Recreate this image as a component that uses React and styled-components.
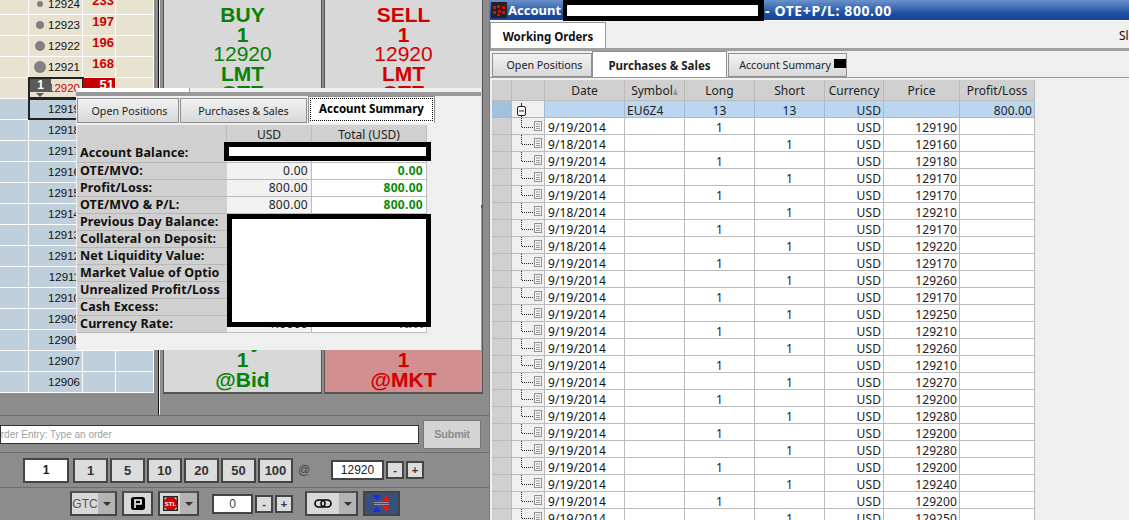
import React from 'react';
import styled, { createGlobalStyle } from 'styled-components';

const Global = createGlobalStyle`
  html, body { margin: 0; padding: 0; width: 1129px; height: 520px; overflow: hidden; background: #efefef; }
  * { box-sizing: border-box; }
  body { font-family: "Noto Sans", "DejaVu Sans", sans-serif; font-size: 12px; color: #111; }
`;

const Page = styled.div`display: flex; width: 1129px; height: 520px; overflow: hidden;`;
const LeftPanel = styled.section`position: relative; width: 490px; height: 520px; background: #8c8c8c; flex: none; display: flex; flex-direction: column; border-right: 1px solid #7a7a7a;`;
const Main = styled.div`height: 416px; flex: none; display: flex; border-bottom: 1px solid #6e6e6e;`;
const Ladder = styled.div`width: 154px; height: 393px; flex: none; overflow: hidden; display: flex; flex-direction: column; justify-content: flex-end; background: #fff;`;
const LRow = styled.div`
  flex: none; height: 21px; display: grid; grid-template-columns: 29px 54px 33px 38px;
  background: ${p => p.$ask ? '#e8e3d0' : '#bfd0dc'}; border-bottom: 1px solid #fff;
`;
const LCell = styled.div`border-right: 1px solid #fff; position: relative;`;
const PriceCell = styled(LCell)`
  display: flex; align-items: center; justify-content: flex-end; padding-right: 2px; font-family: "Liberation Sans", sans-serif;
  font-size: 11.5px; color: ${p => p.$current ? '#c00' : '#111'};
  ${p => p.$boxed ? 'outline: 2px solid #222; outline-offset: -1px;' : ''}
`;
const VolCell = styled(LCell)`
  font: bold 13px/14px "Liberation Sans", sans-serif; color: ${p => p.$hl ? '#fff' : '#c00'}; text-align: right; padding-right: 1px;
  background: ${p => p.$hl ? '#c80000' : 'transparent'};
`;
const Dot = styled.span`
  position: absolute; left: ${p => 11 - p.$s / 2}px; top: 10px; margin-top: ${p => -p.$s / 2}px;
  width: ${p => p.$s}px; height: ${p => p.$s}px; border-radius: 50%; background: #808080;
`;
const PosBadge = styled.span`
  position: absolute; left: 1px; top: 1px; width: 21px; height: 13px; background: #5a5a5a; color: #fff;
  font: bold 12px/13px "Liberation Sans", sans-serif; text-align: center;
`;
const PosArrow = styled.span`
  position: absolute; left: 7px; top: 15px; border: 4px solid transparent; border-top: 4px solid #5a5a5a; border-bottom: 0;
`;
const Split = styled.div`width: 10px; height: 415px; flex: none; padding-left: 4px; display: flex;`;
const SplitBlack = styled.div`width: 1px; background: #111;`;
const SplitWhite = styled.div`width: 1px; background: #f4f4f4;`;
const Buttons = styled.div`display: grid; grid-template-columns: 157px 157px; grid-template-rows: 206px 185px; gap: 2px 4px; height: 393px;`;
const Trade = styled.div`
  background: ${p => p.$bg || '#d8d8d8'}; color: ${p => p.$c}; display: flex; flex-direction: column; align-items: center;
  justify-content: ${p => p.$end ? 'flex-end' : 'flex-start'}; padding: ${p => p.$end ? '0 0 3px' : '5px 0 0'}; font: bold 21px/19.5px "Liberation Sans", sans-serif;
  border-bottom: 1px solid #555; outline: 1px solid #555;
`;
const TradeThin = styled.span`font-weight: 400;`;

const Popup = styled.div`position: absolute; left: 76px; top: 88px; width: 405px; height: 262px; background: #efefef;`;
const PopupStrip = styled.div`height: 4px; background: linear-gradient(to right, #fff 113px, #999 113px, #999 114px, #efefef 114px);`;
const PopupBand = styled.div`height: 4px; background: #999;`;
const TabRow = styled.div`display: flex; align-items: flex-end; height: ${p => p.$h}px; padding-left: ${p => p.$pl}px; ${p => p.$line ? 'border-bottom: 1px solid #999;' : ''}`;
const Tab = styled.div`
  width: ${p => p.$w}px; height: ${p => p.$active ? p.$h + 1 : p.$h - 1}px; flex: none; display: flex; align-items: center; justify-content: center;
  border: 1px solid #8f8f8f; border-bottom: ${p => p.$active ? '0' : '1px solid #8f8f8f'};
  background: ${p => p.$active ? '#fff' : 'linear-gradient(#f2f2f2, #d8d8d8)'}; font-size: ${p => p.$active ? 11.5 : 10.7}px; color: #222;
  font-weight: ${p => p.$active ? 700 : 400}; margin-right: 1px; margin-left: ${p => p.$ml || 0}px;
  padding: ${p => p.$pt || 0}px 0 ${p => p.$pb || 0}px ${p => p.$pad || 0}px; white-space: nowrap;
  ${p => p.$dotted ? 'outline: 1px dotted #111; outline-offset: -3px; color: #000;' : ''}
`;
const TabMark = styled.i`width: 12px; height: 9px; background: #000; display: block; margin: -4px 0 0 3px;`;
const SumTable = styled.div`display: grid; grid-template-columns: 150px 85px 115px; grid-template-rows: 20px 18px; grid-auto-rows: 17px; width: 350px; margin: 2px 0 0 1px; position: relative;`;
const SumHead = styled.div`background: #d0d0d0; border-right: 1px solid #bbb; text-align: center; line-height: 20px; font-size: 12px; color: #222;`;
const SumLabel = styled.div`background: #d0d0d0; font-weight: 700; font-size: 12.5px; line-height: 16px; padding-left: 3px; border-bottom: 1px solid #b8b8b8; white-space: nowrap; overflow: hidden; color: #111; letter-spacing: .1px;`;
const SumVal = styled.div`
  background: ${p => p.$tot ? '#fff' : '#f2f2f2'}; text-align: right; padding-right: 3px; line-height: 16px; font-size: 12px;
  border-bottom: 1px solid #bbb; border-right: 1px solid #bbb; letter-spacing: .3px;
  color: ${p => p.$tot ? '#0a8a0a' : '#222'}; font-weight: ${p => p.$tot ? 700 : 400};
`;
const Redact = styled.div`position: absolute; background: #fff; border: 5px solid #000; left: ${p => p.$l}px; top: ${p => p.$t}px; width: ${p => p.$w}px; height: ${p => p.$h}px;`;

const EntryRow = styled.div`height: 37px; flex: none; display: flex; align-items: center; border-bottom: 1px solid #6e6e6e; padding-right: 8px;`;
const EntryInput = styled.div`
  width: 419px; height: 19px; margin: 0 4px 0 0; background: #fff; border: 1px solid #333; color: #a0a0a0; font-size: 10px; line-height: 17px;
  text-indent: -8px; overflow: hidden; white-space: nowrap; font-family: "Liberation Sans", sans-serif;
`;
const Submit = styled.div`width: 58px; height: 29px; background: #d4d4d4; border: 1px solid #eee; color: #8c8c8c; outline: 1px solid #777; outline-offset: -1px; display: flex; align-items: center; justify-content: center; font: bold 11px "Liberation Sans", sans-serif; letter-spacing: -.3px;`;
const Row = styled.div`height: ${p => p.$h}px; flex: none; display: flex; align-items: center; padding-left: ${p => p.$pl}px; ${p => p.$line ? 'border-bottom: 1px solid #6e6e6e;' : ''}`;
const White = styled.div`
  width: ${p => p.$w}px; height: ${p => p.$h}px; margin-right: ${p => p.$mr ?? 0}px; flex: none; background: #fff; border: 2px solid #444; display: flex; align-items: center; justify-content: center;
  font: bold 12px "Liberation Sans", sans-serif; color: ${p => p.$c || '#222'}; font-weight: ${p => p.$thin ? 400 : 700};
`;
const Qty = styled.div`
  width: 35px; height: 25px; margin-right: 2px; flex: none; background: #dcdcdc; border: 2px solid #444; border-top-color: #555; display: flex; align-items: center; justify-content: center;
  font: bold 13px "Liberation Sans", sans-serif; color: #333;
`;
const At = styled.span`font: 12px "Liberation Sans", sans-serif; color: #444; width: 36px; flex: none; padding-left: 3px;`;
const Step = styled.div`
  width: 18px; height: 18px; margin-right: ${p => p.$mr ?? 2}px; flex: none; background: #dcdcdc; border: 2px solid #444; display: flex; align-items: center; justify-content: center;
  font: bold 11px "Liberation Sans", sans-serif; color: #333;
`;
const Combo = styled.div`
  width: ${p => p.$w}px; height: 25px; margin-right: ${p => p.$mr ?? 0}px; flex: none; border: 2px solid #444; background: #d8d8d8; display: flex; align-items: stretch;
  border-top-color: #555;
`;
const ComboMain = styled.div`flex: 1; display: flex; align-items: center; justify-content: center; font: 12px "Liberation Sans", sans-serif; color: #555;`;
const ComboDrop = styled.div`width: 17px; flex: none; background: #b4b4b4; display: flex; align-items: center; justify-content: center;`;
const Caret = styled.i`width: 0; height: 0; border: 4px solid transparent; border-top: 4px solid #333; border-bottom: 0; display: block;`;
const SwapBtn = styled.div`width: 37px; height: 25px; flex: none; border: 2px solid #444; background: #38507c; display: flex; align-items: center; justify-content: center;`;

const RightPanel = styled.section`flex: 1; height: 520px; background: #efefef; display: flex; flex-direction: column; overflow: hidden;`;
const TitleBar = styled.header`
  height: 21px; flex: none; background: linear-gradient(#6a93cc, #1c4da0 70%, #17439a); display: flex; align-items: center; margin-bottom: 1px;
  color: #fff; font-weight: 700; font-size: 13px; padding-left: 1px; white-space: nowrap; border-bottom: 1px solid #fff;
`;
const TitleRedact = styled.div`width: 201px; height: 21px; margin-bottom: -1px; background: #fff; border: 5px solid #000; border-left-width: 4px; border-right-width: 6px; margin-left: 2px; flex: none;`;
const TitleValue = styled.span`font-size: 14px; letter-spacing: .6px; margin-left: 1px;`;
const TopTabs = styled.div`height: 26px; flex: none; display: flex; justify-content: space-between; overflow: hidden;`;
const WorkTab = styled.div`width: 116px; height: 26px; padding-top: 2px; background: #fff; border: 1px solid #9a9a9a; border-bottom: 0; display: flex; align-items: center; justify-content: center; font-weight: 700; font-size: 11.5px; color: #111;`;
const Sl = styled.span`width: 10px; overflow: hidden; font-size: 12px; line-height: 28px; color: #300;`;
const Band = styled.div`height: 3px; flex: none; background: #a0a0a0;`;
const GridWrap = styled.div`margin: 2px 0 0 2px; width: 543px; flex: none; background: #fff;`;
const GRow = styled.div`display: grid; grid-template-columns: 20px 33px 80px 60px 70px 70px 59px 76px 75px; height: ${p => p.$h || 17}px;`;
const GHead = styled.div`background: #d0d0d0; border-right: 1px solid #bbb; border-bottom: 1px solid #bbb; text-align: center; line-height: 19px; color: #222; white-space: nowrap; overflow: hidden; display: flex; align-items: center; justify-content: center;`;
const GCell = styled.div`
  background: ${p => p.$group ? '#bcd6f0' : p.$tree ? '#f0f0f0' : p.$ind ? '#d0d0d0' : '#fff'};
  ${p => p.$group && p.$tree ? 'background:#f0f0f0;' : ''} ${p => p.$group && p.$ind ? 'background:#a3c0dc;' : ''}
  border-right: 1px solid ${p => p.$group ? '#9ebbd8' : '#bbb'}; border-bottom: 1px solid ${p => p.$group ? '#9ebbd8' : '#bbb'};
  text-align: ${p => p.$a || 'left'}; padding: 1px ${p => p.$a === 'center' ? 0 : 2}px 0; line-height: 17px; color: #222; white-space: nowrap; overflow: hidden;
  letter-spacing: .1px;
`;
const TreeCell = styled(GCell)`padding: 0;`;
const DateText = styled.span`padding-left: 1px; color: #111;`;

const SortIcon = () => (
  <svg width="5" height="7" viewBox="0 0 5 7" style={{ flex: 'none', margin: '2px 0 0 0' }}>
    <path d="M2.5 0L5 7H0z" fill="#999" />
  </svg>
);
const TreeIcon = () => (
  <svg width="32" height="16" viewBox="0 0 32 16" style={{ display: 'block' }}>
    <path d="M9.5 0v10M10 9.5h11" stroke="#222" strokeWidth="1" strokeDasharray="1 1" fill="none" />
    <rect x="22.5" y="3.5" width="7" height="9" fill="#f4f4f4" stroke="#333" strokeDasharray="1 1" />
    <path d="M24 6h4M24 8.5h4M24 10.5h4" stroke="#999" fill="none" />
  </svg>
);
const MinusIcon = () => (
  <svg width="32" height="16" viewBox="0 0 32 16" style={{ display: 'block' }}>
    <path d="M9.5 2v3M9.5 14v3" stroke="#222" />
    <rect x="5.5" y="5.5" width="8" height="9" rx="1.5" fill="#fff" stroke="#222" />
    <path d="M7 10h5" stroke="#222" />
  </svg>
);
const StlIcon = () => (
  <svg width="15" height="15" viewBox="0 0 20 20">
    <rect x="1" y="1" width="18" height="18" fill="#fff" stroke="#222" strokeWidth="2" />
    <path d="M6 1.5h8l4.5 4.5v8L14 18.5H6L1.5 14V6z" fill="#d40000" stroke="#333" />
    <text x="10" y="13" fontFamily="Liberation Sans" fontSize="8" fontWeight="700" fill="#fff" textAnchor="middle">STL</text>
  </svg>
);
const PIcon = () => (
  <svg width="14" height="13" viewBox="0 0 14 13">
    <rect width="14" height="13" rx="2.5" fill="#000" />
    <path d="M4 11V3h6v4H5" stroke="#fff" strokeWidth="1.6" fill="none" />
  </svg>
);
const ChainIcon = () => (
  <svg width="18" height="9" viewBox="0 0 18 9">
    <rect x="1" y="1" width="10" height="7" rx="3.5" fill="none" stroke="#000" strokeWidth="1.6" />
    <rect x="7" y="1" width="10" height="7" rx="3.5" fill="none" stroke="#000" strokeWidth="1.6" />
  </svg>
);
const SwapIcon = () => (
  <svg width="17" height="19" viewBox="0 0 17 19">
    <path d="M0 1h8L4 7z" fill="#1c2ce0" /><path d="M9 7h8l-4-6z" fill="#e01818" />
    <path d="M1 8.5h15M1 10.5h15" stroke="#8a93a8" />
    <path d="M0 18h8l-4-6z" fill="#1c2ce0" /><path d="M9 12h8l-4 6z" fill="#e01818" />
  </svg>
);
const AccountIcon = () => (
  <svg width="16" height="16" viewBox="0 0 16 16" style={{ flex: 'none', marginRight: 1 }}>
    <rect width="16" height="16" fill="#222" />
    <path d="M2 4h3v3H2zM6 3h3v3H6zM11 4h3v3h-3zM2 9h3v3H2zM7 8h3v3H7zM11 9h3v3h-3zM6 12h3v2H6z" fill="#c81414" />
  </svg>
);

const vols = { 12924: '233', 12923: '197', 12922: '196', 12921: '168', 12920: '51' };
const dots = { 12924: 6, 12923: 8, 12922: 10, 12921: 12 };
const ladderPrices = [12924, 12923, 12922, 12921, 12920, 12919, 12918, 12917, 12916, 12915, 12914, 12913, 12912, 12911, 12910, 12909, 12908, 12907, 12906];

const summary = [
  ['Account Balance:', '', ''],
  ['OTE/MVO:', '0.00', '0.00'],
  ['Profit/Loss:', '800.00', '800.00'],
  ['OTE/MVO & P/L:', '800.00', '800.00'],
  ['Previous Day Balance:', '', ''],
  ['Collateral on Deposit:', '', ''],
  ['Net Liquidity Value:', '', ''],
  ['Market Value of Optio', '', ''],
  ['Unrealized Profit/Loss', '', ''],
  ['Cash Excess:', '', ''],
  ['Currency Rate:', '1.0000', 'N/A'],
];

const trades = [
  ['9/19/2014', 'L', 129190], ['9/18/2014', 'S', 129160], ['9/19/2014', 'L', 129180], ['9/18/2014', 'S', 129170],
  ['9/19/2014', 'L', 129170], ['9/18/2014', 'S', 129210], ['9/19/2014', 'L', 129170], ['9/18/2014', 'S', 129220],
  ['9/19/2014', 'L', 129170], ['9/19/2014', 'S', 129260], ['9/19/2014', 'L', 129170], ['9/19/2014', 'S', 129250],
  ['9/19/2014', 'L', 129210], ['9/19/2014', 'S', 129260], ['9/19/2014', 'L', 129210], ['9/19/2014', 'S', 129270],
  ['9/19/2014', 'L', 129200], ['9/19/2014', 'S', 129280], ['9/19/2014', 'L', 129200], ['9/19/2014', 'S', 129280],
  ['9/19/2014', 'L', 129200], ['9/19/2014', 'S', 129240], ['9/19/2014', 'L', 129200], ['9/19/2014', 'S', 129250],
];

export default function App() {
  return (
    <Page>
      <Global />
      <LeftPanel>
        <Main>
          <Ladder>
            {ladderPrices.map(p => (
              <LRow key={p} $ask={p >= 12920}>
                <LCell />
                <PriceCell $current={p === 12920} $boxed={p === 12920 || p === 12919}>
                  {dots[p] && <Dot $s={dots[p]} />}
                  {p === 12920 && <><PosBadge>1</PosBadge><PosArrow /></>}
                  {p}
                </PriceCell>
                <VolCell $hl={p === 12920}>{vols[p]}</VolCell>
                <LCell />
              </LRow>
            ))}
          </Ladder>
          <Split><SplitBlack /><SplitWhite /></Split>
          <Buttons>
            <Trade $c="#078207">BUY<span>1</span><TradeThin>12920</TradeThin><span>LMT</span><span>OTE</span></Trade>
            <Trade $c="#d40000">SELL<span>1</span><TradeThin>12920</TradeThin><span>LMT</span><span>OTE</span></Trade>
            <Trade $end $c="#078207"><span>Buy</span><span>1</span><span>@Bid</span></Trade>
            <Trade $end $bg="#d18f8f" $c="#d40000"><span>Sell</span><span>1</span><span>@MKT</span></Trade>
          </Buttons>
        </Main>
        <EntryRow>
          <EntryInput>Order Entry: Type an order</EntryInput>
          <Submit>Submit</Submit>
        </EntryRow>
        <Row $h={35} $pl={23} $line>
          <White $w={46} $h={25} $mr={4}>1</White>
          {[1, 5, 10, 20, 50, 100].map(q => <Qty key={q}>{q}</Qty>)}
          <At>@</At>
          <White $w={53} $h={20} $mr={2} $thin>12920</White>
          <Step>-</Step>
          <Step>+</Step>
        </Row>
        <Row $h={31} $pl={70}>
          <Combo $w={47} $mr={5}><ComboMain>GTC</ComboMain><ComboDrop><Caret /></ComboDrop></Combo>
          <Combo $w={31} $mr={5}><ComboMain><PIcon /></ComboMain></Combo>
          <Combo $w={41} $mr={13}><ComboMain><StlIcon /></ComboMain><ComboDrop><Caret /></ComboDrop></Combo>
          <White $w={41} $h={20} $mr={2} $thin $c="#345">0</White>
          <Step>-</Step>
          <Step $mr={12}>+</Step>
          <Combo $w={53} $mr={5}><ComboMain><ChainIcon /></ComboMain><ComboDrop><Caret /></ComboDrop></Combo>
          <SwapBtn><SwapIcon /></SwapBtn>
        </Row>
        <Popup>
          <PopupStrip />
          <PopupBand />
          <TabRow $h={27} $pl={1}>
            <Tab $w={102} $h={26} $pad={3}>Open Positions</Tab>
            <Tab $w={127} $h={26}>Purchases &amp; Sales</Tab>
            <Tab $w={127} $h={26} $active $dotted $pb={4}>Account Summary</Tab>
          </TabRow>
          <SumTable>
            <SumHead /><SumHead>USD</SumHead><SumHead>Total (USD)</SumHead>
            {summary.map(([l, a, b]) => (
              <React.Fragment key={l}>
                <SumLabel>{l}</SumLabel>
                <SumVal>{a}</SumVal>
                <SumVal $tot>{b}</SumVal>
              </React.Fragment>
            ))}
            <Redact $l={147} $t={17} $w={207} $h={19} />
            <Redact $l={150} $t={89} $w={204} $h={113} />
          </SumTable>
        </Popup>
      </LeftPanel>
      <RightPanel>
        <TitleBar>
          <AccountIcon />
          Account
          <TitleRedact />
          <TitleValue>- OTE+P/L: 800.00</TitleValue>
        </TitleBar>
        <TopTabs>
          <WorkTab>Working Orders</WorkTab>
          <Sl>Sl</Sl>
        </TopTabs>
        <Band />
        <TabRow $h={28} $pl={2} $line>
          <Tab $w={100} $h={25} $pad={5}>Open Positions</Tab>
          <Tab $w={135} $h={25} $active $ml={-1} $pt={2}>Purchases &amp; Sales</Tab>
          <Tab $w={119} $h={25} $pad={10}>Account Summary<TabMark /></Tab>
        </TabRow>
        <GridWrap>
          <GRow $h={21}>
            <GHead /><GHead /><GHead>Date</GHead><GHead>Symbol<SortIcon /></GHead><GHead>Long</GHead><GHead>Short</GHead><GHead>Currency</GHead><GHead>Price</GHead><GHead>Profit/Loss</GHead>
          </GRow>
          <GRow>
            <GCell $group $ind /><TreeCell $group $tree><MinusIcon /></TreeCell><GCell $group />
            <GCell $group>EU6Z4</GCell><GCell $group $a="center">13</GCell><GCell $group $a="center">13</GCell>
            <GCell $group $a="right">USD</GCell><GCell $group /><GCell $group $a="right">800.00</GCell>
          </GRow>
          {trades.map(([d, s, p], i) => (
            <GRow key={i}>
              <GCell $ind /><TreeCell $tree><TreeIcon /></TreeCell><GCell><DateText>{d}</DateText></GCell><GCell />
              <GCell $a="center">{s === 'L' ? 1 : ''}</GCell><GCell $a="center">{s === 'S' ? 1 : ''}</GCell>
              <GCell $a="right">USD</GCell><GCell $a="right">{p}</GCell><GCell />
            </GRow>
          ))}
        </GridWrap>
      </RightPanel>
    </Page>
  );
}
